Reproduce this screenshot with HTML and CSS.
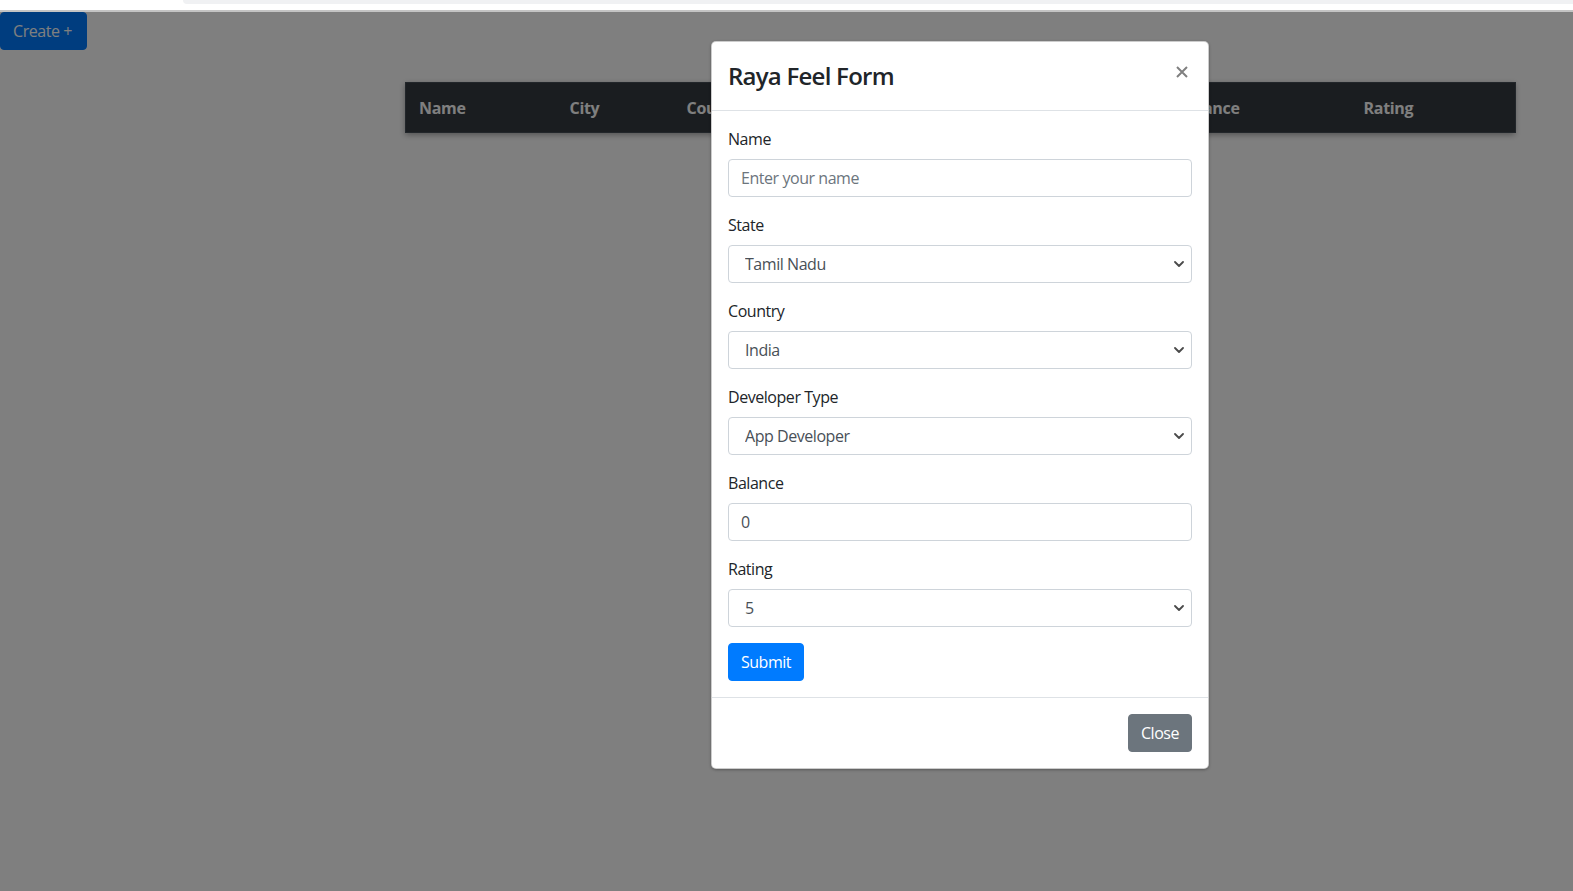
FILE: index.html
```html
<!DOCTYPE html>
<html lang="en">
<head>
<meta charset="utf-8">
<title>Raya Feel Form</title>
<link rel="stylesheet" href="styles.css">
</head>
<body>
<div class="chrome">
  <div class="chrome-tab"></div>
  <div class="chrome-line"></div>
</div>
<div class="page">
  <button class="btn btn-create">Create +</button>
  <div class="table-wrap">
    <table class="data-table">
      <colgroup>
        <col class="c-name"><col class="c-city"><col class="c-mid"><col class="c-mid"><col class="c-mid"><col class="c-bal"><col class="c-rate">
      </colgroup>
      <thead>
        <tr><th>Name</th><th>City</th><th>Country</th><th>State</th><th>Developer Type</th><th>Balance</th><th>Rating</th></tr>
      </thead>
    </table>
  </div>

  <div class="backdrop"></div>

  <div class="modal">
    <div class="modal-header">
      <h4 class="modal-title">Raya Feel Form</h4>
      <button class="close" aria-label="Close">
        <svg width="12" height="12" viewBox="0 0 12 12"><path d="M1 1 L11 11 M11 1 L1 11" stroke="#808080" stroke-width="2" stroke-linecap="butt"/></svg>
      </button>
    </div>
    <div class="modal-body">
      <div class="form-group">
        <label class="label">Name</label>
        <input class="form-control" type="text" placeholder="Enter your name">
      </div>
      <div class="form-group">
        <label class="label">State</label>
        <div class="select-wrap">
          <select class="form-control form-select"><option>Tamil Nadu</option></select>
          <svg class="chev" width="10" height="6" viewBox="0 0 10 6"><path d="M1 1 L5 5 L9 1" fill="none" stroke="#4a4a4a" stroke-width="1.8" stroke-linecap="round" stroke-linejoin="round"/></svg>
        </div>
      </div>
      <div class="form-group">
        <label class="label">Country</label>
        <div class="select-wrap">
          <select class="form-control form-select"><option>India</option></select>
          <svg class="chev" width="10" height="6" viewBox="0 0 10 6"><path d="M1 1 L5 5 L9 1" fill="none" stroke="#4a4a4a" stroke-width="1.8" stroke-linecap="round" stroke-linejoin="round"/></svg>
        </div>
      </div>
      <div class="form-group">
        <label class="label">Developer Type</label>
        <div class="select-wrap">
          <select class="form-control form-select"><option>App Developer</option></select>
          <svg class="chev" width="10" height="6" viewBox="0 0 10 6"><path d="M1 1 L5 5 L9 1" fill="none" stroke="#4a4a4a" stroke-width="1.8" stroke-linecap="round" stroke-linejoin="round"/></svg>
        </div>
      </div>
      <div class="form-group">
        <label class="label">Balance</label>
        <input class="form-control" type="text" value="0">
      </div>
      <div class="form-group">
        <label class="label">Rating</label>
        <div class="select-wrap">
          <select class="form-control form-select"><option>5</option></select>
          <svg class="chev" width="10" height="6" viewBox="0 0 10 6"><path d="M1 1 L5 5 L9 1" fill="none" stroke="#4a4a4a" stroke-width="1.8" stroke-linecap="round" stroke-linejoin="round"/></svg>
        </div>
      </div>
      <button class="btn btn-primary">Submit</button>
    </div>
    <div class="modal-footer">
      <button class="btn btn-secondary">Close</button>
    </div>
  </div>
</div>
</body>
</html>
```

FILE: styles.css
```css
* { box-sizing: border-box; }
html, body { margin: 0; padding: 0; }
body {
  font-family: "Open Sans", "Noto Sans", sans-serif;
  font-size: 16px;
  line-height: 1.5;
  letter-spacing: -0.45px;
  color: #212529;
  background: #fff;
  width: 1573px;
  height: 891px;
  overflow: hidden;
}

.chrome {
  height: 12px;
  background: #fff;
  position: relative;
}
.chrome-tab {
  margin-left: 183px;
  height: 4px;
  background: #f0f1f3;
  border-bottom-left-radius: 6px;
}
.chrome-line {
  position: absolute;
  left: 0; right: 0; bottom: 0;
  height: 2px;
  background: #c4c4c4;
}

.page {
  position: relative;
  height: 879px;
  background: #fff;
}

.btn {
  display: inline-block;
  font-family: inherit;
  font-size: 16px;
  line-height: 24px;
  letter-spacing: -0.45px;
  padding: 6px 12px;
  border: 1px solid transparent;
  border-radius: 4px;
  color: #fff;
  cursor: pointer;
}
.btn-create {
  display: block;
  background: #007bff;
  border-color: #007bff;
  width: 87px;
  height: 38px;
  padding: 6px 0 6px 12px;
  text-align: left;
}
.btn-primary { background: #007bff; border-color: #007bff; height: 38px; width: 76px; padding: 6px 0; text-align: center; }
.btn-secondary { background: #6c757d; border-color: #6c757d; height: 38px; width: 64px; padding: 6px 0; text-align: center; }

.table-wrap {
  margin: 32px 0 0 405px;
  width: 1110px;
  box-shadow: 0 2px 6px rgba(0,0,0,.35);
}
.data-table {
  width: 1110px;
  border-collapse: collapse;
  table-layout: fixed;
}
.c-name { width: 151px; }
.c-city { width: 117px; }
.c-mid { width: 164px; }
.c-bal { width: 185px; }
.c-rate { width: 165px; }
.data-table th {
  background: #343a40;
  color: #fff;
  font-weight: 700;
  text-align: left;
  padding: 12px 12px 12px 13px;
  height: 50px;
  border-top: 1px solid #454d55;
  border-bottom: 1px solid #454d55;
  white-space: nowrap;
  overflow: hidden;
  letter-spacing: -0.3px;
}
.data-table th:first-child { border-left: 1px solid #454d55; }
.data-table th:last-child { border-right: 1px solid #454d55; }

.backdrop {
  position: absolute;
  inset: 0;
  background: rgba(0,0,0,.5);
}

.modal {
  position: absolute;
  left: 711px;
  top: 29px;
  width: 498px;
  background: #fff;
  border: 1px solid rgba(0,0,0,.2);
  border-radius: 5px;
  box-shadow: 0 1px 3px rgba(0,0,0,.3);
}
.modal-header {
  display: flex;
  justify-content: space-between;
  align-items: flex-start;
  padding: 16px;
  border-bottom: 1px solid #dee2e6;
}
.modal-title {
  margin: 0;
  font-size: 24px;
  font-weight: 600;
  line-height: 36px;
  letter-spacing: -0.75px;
  color: #212529;
}
.close {
  display: flex;
  background: none;
  border: 0;
  padding: 0;
  margin: 8px 4px 0 0;
  cursor: pointer;
}
.modal-body {
  padding: 16px;
}
.form-group { margin-bottom: 16px; }
.label {
  display: block;
  margin-bottom: 8px;
  line-height: 24px;
  color: #212529;
}
.form-control {
  display: block;
  width: 100%;
  height: 38px;
  padding: 6px 12px;
  font-family: inherit;
  font-size: 16px;
  line-height: 24px;
  letter-spacing: -0.45px;
  color: #495057;
  background: #fff;
  border: 1px solid #ced4da;
  border-radius: 4px;
  outline: none;
}
.form-control::placeholder { color: #6c757d; opacity: 1; }
.select-wrap { position: relative; }
.form-select {
  appearance: none;
  -webkit-appearance: none;
  padding-left: 16px;
}
.chev {
  position: absolute;
  right: 8px;
  top: 16px;
  pointer-events: none;
}
.modal-footer {
  display: flex;
  justify-content: flex-end;
  padding: 16px;
  border-top: 1px solid #dee2e6;
}
```
